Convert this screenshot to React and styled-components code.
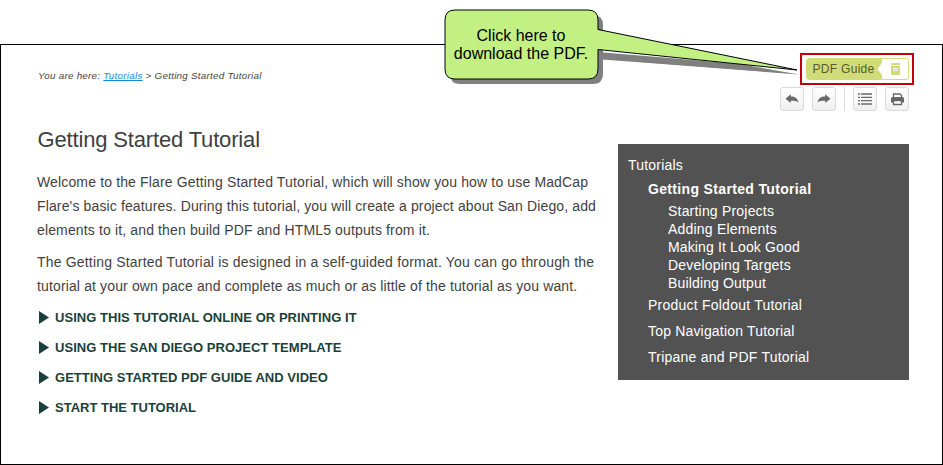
import React from "react";
import styled, { createGlobalStyle } from "styled-components";

const Global = createGlobalStyle`
  * { box-sizing: border-box; }
  body { margin: 0; background: #fff; font-family: "Liberation Sans", Arial, sans-serif; color: #3f3f3f; overflow: hidden; }
`;

const Screen = styled.div`
  position: relative;
  width: 943px;
  height: 465px;
  padding-top: 44px;
`;

const Page = styled.main`
  height: 421px;
  border: 1px solid #000;
  padding: 8px 33px 0 36px;
  display: flex;
  justify-content: space-between;
`;

const Content = styled.article`
  width: 570px;
`;

const Breadcrumb = styled.nav`
  margin-top: 16px;
  height: 14px;
  padding-left: 1px;
  font-size: 9.8px;
  line-height: 14px;
  font-style: italic;
  letter-spacing: 0.27px;
  white-space: nowrap;

  a { color: #0c8be0; text-decoration: underline; }
`;

const Title = styled.h1`
  margin: 44px 0 0;
  padding-left: 0.5px;
  font-size: 22px;
  line-height: 26px;
  font-weight: 400;
  white-space: nowrap;
  letter-spacing: -0.16px;
`;

const Paragraph = styled.p`
  margin: ${(p) => p.$top}px 0 0;
  font-size: 14px;
  line-height: 24px;
`;

const Line = styled.span`
  display: block;
  white-space: nowrap;
  letter-spacing: ${(p) => p.$track}px;
`;

const DropDowns = styled.div`
  margin-top: 4px;
`;

const DropDown = styled.div`
  display: flex;
  align-items: center;
  gap: 6px;
  height: 30px;
  padding-left: 2px;
  color: #1b3f3a;
  font-size: 13px;
  font-weight: 700;
  white-space: nowrap;
  letter-spacing: ${(p) => p.$track}px;
`;

const Side = styled.aside`
  width: 291px;
  display: flex;
  flex-direction: column;
  align-items: flex-end;
`;

const GuideFrame = styled.div`
  width: 114px;
  height: 32px;
  margin-right: -5px;
  border: 2px solid #c2000b;
  padding: 3px 3px 3px 4px;
`;

const GuideButton = styled.button`
  display: flex;
  width: 103px;
  height: 22px;
  padding: 0;
  border: 1px solid #d0dc78;
  border-radius: 3px;
  background: #fff;
  overflow: hidden;
`;

const GuideLabel = styled.span`
  width: 75px;
  flex: none;
  padding-left: 5.5px;
  background: #d0dc78;
  color: #585a2c;
  font: 12px/20px "Liberation Sans", Arial, sans-serif;
  letter-spacing: 0.3px;
  text-align: left;
  white-space: nowrap;
`;

const BookIcon = styled.svg`
  flex: none;
  margin-left: -5px;
`;

const Toolbar = styled.div`
  display: flex;
  gap: 8px;
  margin-top: 2px;
`;

const ToolButton = styled.button`
  display: flex;
  width: 24px;
  height: 24px;
  padding: 0;
  border: 1px solid #dadada;
  border-radius: 3px;
  background: linear-gradient(#fff, #f0f0f0);
`;

const Divider = styled.span`
  width: 1px;
  height: 24px;
  background: #dadada;
`;

const Menu = styled.ul`
  width: 291px;
  height: 236px;
  margin: 33px 0 0;
  padding: 8px 0 0 10px;
  list-style: none;
  background: #525252;
  color: #fff;
  font-size: 14px;
`;

const MenuItem = styled.li`
  padding-left: ${(p) => p.$level * 20}px;
  height: ${(p) => (p.$level === 2 ? 18 : 26)}px;
  line-height: ${(p) => (p.$level === 2 ? 18 : 26)}px;
  font-weight: ${(p) => (p.$active ? 700 : 400)};
  margin-top: ${(p) => p.$shift || 0}px;
  letter-spacing: ${(p) => p.$track}px;
  white-space: nowrap;
`;

const Callout = styled.div`
  position: absolute;
  left: 440px;
  top: 5px;
  width: 370px;
  height: 85px;
`;

const CalloutShape = styled.svg`
  position: absolute;
  inset: 0;
`;

const CalloutText = styled.p`
  position: absolute;
  left: 5px;
  top: 22px;
  width: 152px;
  margin: 0;
  font-size: 16px;
  line-height: 18px;
  text-align: center;
  color: #000;
  white-space: nowrap;
`;

const sections = [
  ["USING THIS TUTORIAL ONLINE OR PRINTING IT", 0.04],
  ["USING THE SAN DIEGO PROJECT TEMPLATE", 0.04],
  ["GETTING STARTED PDF GUIDE AND VIDEO", 0.04],
  ["START THE TUTORIAL", 0],
];

const menu = [
  { text: "Tutorials", level: 0, track: 0.2 },
  { text: "Getting Started Tutorial", level: 1, active: true, shift: -2, track: 0.34 },
  { text: "Starting Projects", level: 2, track: 0.2 },
  { text: "Adding Elements", level: 2, track: 0.2 },
  { text: "Making It Look Good", level: 2, track: 0.14 },
  { text: "Developing Targets", level: 2, track: 0.18 },
  { text: "Building Output", level: 2, track: 0.15 },
  { text: "Product Foldout Tutorial", level: 1, track: 0.23 },
  { text: "Top Navigation Tutorial", level: 1, track: 0.18 },
  { text: "Tripane and PDF Tutorial", level: 1, track: 0.23 },
];

const Arrow = () => (
  <path
    d="M4.500 10.700L9.800 6.200V8.400C14 8.400 16.800 10.200 17.500 14.600C15.500 12.800 13.500 12.700 9.800 12.700V15Z"
    fill="#6a6a6a"
  />
);

export default function App() {
  return (
    <>
      <Global />
      <Screen>
        <Page>
          <Content>
            <Breadcrumb>
              You are here: <a>Tutorials</a> &gt; Getting Started Tutorial
            </Breadcrumb>
            <Title>Getting Started Tutorial</Title>
            <Paragraph $top={17}>
              <Line $track={0.145}>Welcome to the Flare Getting Started Tutorial, which will show you how to use MadCap</Line>
              <Line $track={0.135}>Flare's basic features. During this tutorial, you will create a project about San Diego, add</Line>
              <Line $track={0.14}>elements to it, and then build PDF and HTML5 outputs from it.</Line>
            </Paragraph>
            <Paragraph $top={8}>
              <Line $track={0.185}>The Getting Started Tutorial is designed in a self-guided format. You can go through the</Line>
              <Line $track={0.135}>tutorial at your own pace and complete as much or as little of the tutorial as you want.</Line>
            </Paragraph>
            <DropDowns>
              {sections.map(([text, track]) => (
                <DropDown key={text} $track={track}>
                  <svg width="10" height="13"><path d="M0 0L10 6.500L0 13Z" fill="#1b3f3a" /></svg>
                  {text}
                </DropDown>
              ))}
            </DropDowns>
          </Content>
          <Side>
            <GuideFrame>
              <GuideButton>
                <GuideLabel>PDF Guide</GuideLabel>
                <BookIcon width="31" height="20">
                  <path d="M0.500 10L5 4V16Z" fill="#fff" />
                  <path d="M14 6V5Q14 4 15 4H23V6.200H14ZM14 7H23V16H15Q14 16 14 15Z" fill="#d0dc78" />
                  <path d="M16 9.500H21M16 11.500H21" stroke="#fff" />
                </BookIcon>
              </GuideButton>
            </GuideFrame>
            <Toolbar>
              <ToolButton><svg width="22" height="22"><Arrow /></svg></ToolButton>
              <ToolButton><svg width="22" height="22"><g transform="matrix(-1 0 0 1 22 0)"><Arrow /></g></svg></ToolButton>
              <Divider />
              <ToolButton>
                <svg width="22" height="22">
                  <path d="M4 6h2M7 6h11M4 9.300h2M7 9.300h11M4 12.700h2M7 12.700h11M4 16h2M7 16h11" stroke="#6a6a6a" strokeWidth="1.300" />
                </svg>
              </ToolButton>
              <ToolButton>
                <svg width="22" height="22">
                  <path d="M7.500 10V6H14L15.500 7.500V10" fill="#fff" stroke="#666" strokeWidth="1.300" />
                  <path d="M6.500 9H16.500Q18 9 18 10.500V14.500H5V10.500Q5 9 6.500 9Z" fill="#666" />
                  <path d="M7.500 12.700H15.500V16.500H7.500Z" fill="#fff" stroke="#666" strokeWidth="1.300" />
                </svg>
              </ToolButton>
            </Toolbar>
            <Menu>
              {menu.map((m) => (
                <MenuItem key={m.text} $level={m.level} $active={m.active} $shift={m.shift} $track={m.track}>{m.text}</MenuItem>
              ))}
            </Menu>
          </Side>
        </Page>
        <Callout>
          <CalloutShape width="370" height="85">
            <path d="M20 10H153Q163 10 163 20V49.500L358 69L163 54V69Q163 79 153 79H20Q10 79 10 69V20Q10 10 20 10Z" fill="#808080" />
            <path d="M158 47L300 59L359 69.500L163 54.500Z" fill="#808080" />
            <path
              d="M15 5H148Q158 5 158 15V24.500L357 65L158 44.500V64Q158 74 148 74H15Q5 74 5 64V15Q5 5 15 5Z"
              fill="#c3f083"
              stroke="#000"
              strokeLinejoin="bevel"
            />
          </CalloutShape>
          <CalloutText>
            Click here to
            <br />
            download the PDF.
          </CalloutText>
        </Callout>
      </Screen>
    </>
  );
}
